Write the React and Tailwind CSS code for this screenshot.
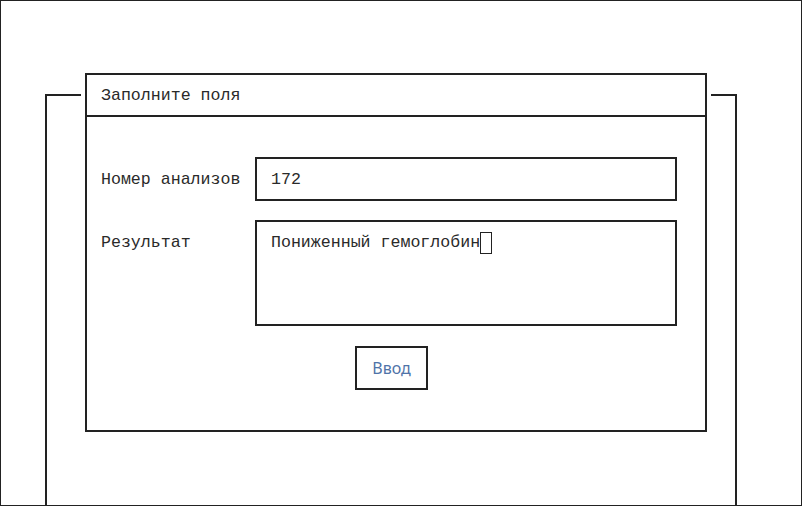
export default function App() {
  const mono = { fontFamily: '"Liberation Mono", "DejaVu Sans Mono", monospace' };

  return (
    <div className="relative w-[802px] h-[506px] overflow-hidden border border-[#222] bg-white text-[#2a2a2a]">
      {/* background window */}
      <div className="ml-[44px] mt-[93px] w-[692px] h-[500px] border-2 border-b-0 border-[#222]" />

      {/* dialog */}
      <div
        className="absolute left-[84px] top-[72px] w-[622px] h-[359px] flex flex-col border-2 border-[#222] bg-white shadow-[0_0_0_4px_#ffffff] text-[16.6px]"
        style={mono}
      >
        <div className="h-[42px] shrink-0 flex items-center px-[14px] pt-[2px] border-b-2 border-[#222]">
          Заполните поля
        </div>

        <div className="flex flex-col pt-[40px] pl-[14px]">
          <div className="flex items-center">
            <div className="w-[154px] shrink-0 pt-[2px]">Номер анализов</div>
            <div className="w-[422px] h-[44px] flex items-center px-[14px] pt-[2px] border-2 border-[#222]">
              172
            </div>
          </div>

          <div className="flex items-start mt-[19px]">
            <div className="w-[154px] shrink-0 pt-[12px] leading-[22px]">Результат</div>
            <div className="w-[422px] h-[106px] px-[14px] pt-[10px] leading-[22px] border-2 border-[#222]">
              <span className="align-top">Пониженный гемоглобин</span>
              <span className="inline-block align-top w-[12px] h-[22px] border border-[#222]" />
            </div>
          </div>

          <div className="mt-[20px] ml-[254px]">
            <button
              className="w-[73px] h-[44px] border-2 border-[#222] text-[16px] text-[#4f73a8]"
              style={{ fontFamily: '"Noto Sans", "Open Sans", sans-serif' }}
            >
              Ввод
            </button>
          </div>
        </div>
      </div>
    </div>
  );
}
